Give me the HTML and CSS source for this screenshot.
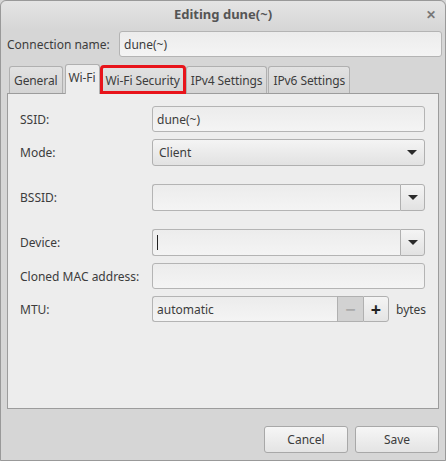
FILE: index.html
```html
<!DOCTYPE html>
<html lang="en">

<head>
    <meta charset="UTF-8">
    <title>Editing dune(~)</title>
    <link rel="stylesheet" href="styles.css">
</head>

<body>
    <div class="window">
        <div class="titlebar">
            <span class="title">Editing dune(~)</span>
            <span class="close">&#x2715;</span>
        </div>

        <div class="name-row">
            <label>Connection name:</label>
            <div class="entry name-entry">dune(~)</div>
        </div>

        <div class="tabs">
            <div class="tab">General</div>
            <div class="tab active">Wi-Fi</div>
            <div class="tab marked">Wi-Fi Security</div>
            <div class="tab">IPv4 Settings</div>
            <div class="tab">IPv6 Settings</div>
        </div>

        <div class="panel">
            <div class="row">
                <label>SSID:</label>
                <div class="entry">dune(~)</div>
            </div>
            <div class="row">
                <label>Mode:</label>
                <div class="combo">Client <span class="arrow"></span></div>
            </div>
            <div class="row spaced">
                <label>BSSID:</label>
                <div class="combo-entry">
                    <div class="entry"></div>
                    <div class="drop"><span class="arrow"></span></div>
                </div>
            </div>
            <div class="row spaced">
                <label>Device:</label>
                <div class="combo-entry">
                    <div class="entry"><span class="caret"></span></div>
                    <div class="drop"><span class="arrow"></span></div>
                </div>
            </div>
            <div class="row">
                <label>Cloned MAC address:</label>
                <div class="entry"></div>
            </div>
            <div class="row">
                <label>MTU:</label>
                <div class="spin-row">
                    <div class="spin">
                        <div class="entry">automatic</div>
                        <div class="spin-btn minus">&minus;</div>
                        <div class="spin-btn plus">+</div>
                    </div>
                    <span class="unit">bytes</span>
                </div>
            </div>
        </div>

        <div class="actions">
            <button>Cancel</button>
            <button>Save</button>
        </div>
    </div>
</body>

</html>
```

FILE: styles.css
```css
body {
    margin: 0;
    font-family: 'Noto Sans', sans-serif;
    font-size: 12px;
    color: #3c3c3c;
    background: #d6d6d6;
}

.window {
    width: 446px;
    height: 461px;
    box-sizing: border-box;
    border: 1px solid #999;
    border-radius: 6px 6px 0 0;
    background: #d6d6d6;
    position: relative;
}

.titlebar {
    height: 28px;
    display: flex;
    align-items: center;
    justify-content: center;
    border-radius: 6px 6px 0 0;
    background: linear-gradient(#e4e4e4, #d6d6d6);
}

.title {
    font-size: 13px;
    font-weight: bold;
    color: #555;
    margin-top: -2px;
}

.close {
    position: absolute;
    right: 9px;
    top: 5px;
    font-size: 12px;
    font-weight: bold;
    color: #777;
}

.name-row {
    display: flex;
    align-items: center;
    padding: 2px 3px 0 6px;
}

.name-row label {
    width: 112px;
}

.name-row .name-entry {
    flex: 1;
}

.entry {
    height: 26px;
    box-sizing: border-box;
    border: 1px solid #b4b4b4;
    border-radius: 3px;
    background: linear-gradient(#ececec, #f4f4f4);
    padding: 0 4px;
    display: flex;
    align-items: center;
}

.tabs {
    display: flex;
    align-items: flex-end;
    gap: 1px;
    padding: 7px 0 0 8px;
    height: 29px;
    box-sizing: content-box;
    letter-spacing: -0.1px;
}

.tab {
    height: 27px;
    box-sizing: border-box;
    padding: 0 4px;
    display: flex;
    align-items: center;
    border: 1px solid #b0b0b0;
    border-bottom: none;
    border-radius: 3px 3px 0 0;
    background: linear-gradient(#e2e2e2, #d4d4d4);
}

.tab.active {
    height: 30px;
    margin: 0 0 -1px 1px;
    padding: 0 3px 4px;
    background: #ededed;
    position: relative;
    z-index: 1;
}

.tab.marked {
    outline: 3px solid #e8141b;
    outline-offset: -2px;
}

.panel {
    margin: 0 6px 0 6px;
    height: 316px;
    box-sizing: border-box;
    border: 1px solid #9c9c9c;
    background: #ededed;
    padding: 12px 13px 0 12px;
    display: flex;
    flex-direction: column;
    gap: 7px;
}

.row {
    display: grid;
    grid-template-columns: 132px 1fr;
    align-items: center;
}

.row.spaced {
    margin-top: 11px;
}

.combo {
    height: 27px;
    box-sizing: border-box;
    border: 1px solid #b0b0b0;
    border-radius: 3px;
    background: linear-gradient(#f4f4f4, #e2e2e2);
    padding: 0 7px 0 6px;
    display: flex;
    align-items: center;
    justify-content: space-between;
}

.arrow {
    width: 0;
    height: 0;
    border-left: 5px solid transparent;
    border-right: 5px solid transparent;
    border-top: 5px solid #2a2a2a;
}

.combo-entry {
    display: flex;
    height: 27px;
}

.combo-entry .entry {
    flex: 1;
    height: 27px;
    border-radius: 3px 0 0 3px;
    border-right: none;
}

.drop {
    width: 25px;
    box-sizing: border-box;
    border: 1px solid #b0b0b0;
    border-radius: 0 3px 3px 0;
    background: linear-gradient(#f4f4f4, #e2e2e2);
    display: flex;
    align-items: center;
    justify-content: center;
}

.caret {
    width: 1px;
    height: 15px;
    background: #222;
}

.spin-row {
    display: flex;
    align-items: center;
    gap: 7px;
}

.spin {
    display: flex;
    width: 237px;
    height: 26px;
}

.spin .entry {
    flex: 1;
    border-radius: 3px 0 0 3px;
    border-right: none;
}

.spin-btn {
    width: 26px;
    box-sizing: border-box;
    border: 1px solid #b0b0b0;
    display: flex;
    align-items: center;
    justify-content: center;
    font-size: 18px;
    font-weight: bold;
    background: linear-gradient(#f4f4f4, #e4e4e4);
    color: #222;
}

.spin-btn.minus {
    background: #d2d2d2;
    color: #aaa;
    border-right: none;
}

.spin-btn.plus {
    border-radius: 0 3px 3px 0;
}

.actions {
    display: flex;
    justify-content: flex-end;
    gap: 7px;
    padding: 17px 6px 0 0;
}

button {
    width: 84px;
    height: 27px;
    font-family: 'Noto Sans', sans-serif;
    font-size: 12px;
    color: #3c3c3c;
    border: 1px solid #a8a8a8;
    border-radius: 3px;
    background: linear-gradient(#f6f6f6, #e4e4e4);
}
```
